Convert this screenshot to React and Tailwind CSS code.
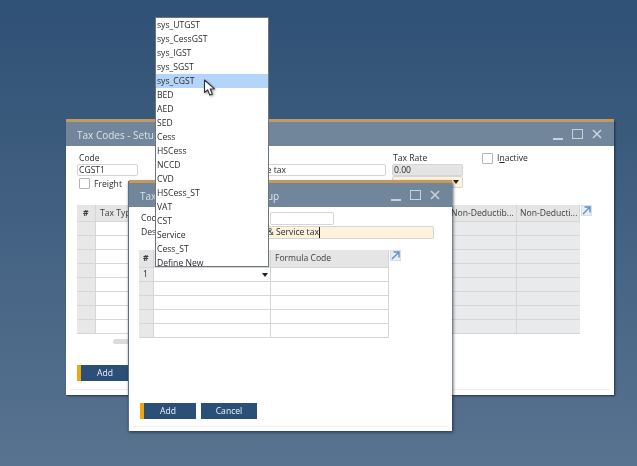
import React from "react";

const font = { fontFamily: '"Open Sans","Liberation Sans",sans-serif' };

function WinButtons() {
  return (
    <div className="flex items-center gap-[9px]">
      <span className="w-[10px] h-[2px] bg-[#c9d2db] mt-[9px]" />
      <span className="w-[11px] h-[10px] border-[1.5px] border-[#c9d2db]" />
      <svg width="10" height="10" viewBox="0 0 10 10" className="stroke-[#c9d2db]" strokeWidth="1.6"><path d="M1 1l8 8M9 1l-8 8" /></svg>
    </div>
  );
}

function Title({ text }) {
  return (
    <div className="h-[24px] bg-[#71859b] border-t-[3px] border-[#c19a5f] box-content -mt-px flex items-center justify-between pl-[11px] pr-[12px]">
      <span className="text-[10px] pt-[2px] text-[#dde3e9] whitespace-nowrap">{text}</span>
      <WinButtons />
    </div>
  );
}

function Expand() {
  return (
    <div className="w-[11px] h-[11px] bg-[#e6edf5] border border-[#d5dfe9] flex items-center justify-center">
      <svg width="9" height="9" viewBox="0 0 9 9" fill="none" stroke="#5f8fc4" strokeWidth="1.4"><path d="M1 8L7.5 1.5M2.5 1h5.5v5.5" /></svg>
    </div>
  );
}

function Btn({ label, accent }) {
  return (
    <div className={`w-[56px] h-[16px] flex items-center justify-center bg-[#2a5078] text-[8.6px] text-[#eef2f5] ${accent ? "border-l-4 border-[#eea70f] pr-[4px]" : ""}`}>
      {label}
    </div>
  );
}

function Input({ className = "", children }) {
  return (
    <div className={`h-[12px] border border-[#d5d5d5] rounded-[2px] text-[8.6px] leading-[10px] text-[#2b2b2b] pl-px overflow-hidden whitespace-nowrap ${className}`}>
      {children}
    </div>
  );
}

const backCols = "grid grid-cols-[18px_100px_100px_153px_68px_64px]";

function BackTable() {
  return (
    <div className="w-[503px] border-r border-b border-[#d6d6d6]">
      <div className={`${backCols} h-[16px] bg-[#e5e5e5] text-[8.6px] leading-[16px] text-[#3c3c3c]`}>
        <span className="pl-[6px] font-bold">#</span>
        <span className="pl-[4px] border-l border-[#d6d6d6]">Tax Type</span>
        <span className="border-l border-[#d6d6d6]" />
        <span className="border-l border-[#d6d6d6]" />
        <span className="pl-[2px] border-l border-[#d6d6d6] whitespace-nowrap overflow-hidden">Non-Deductib...</span>
        <span className="pl-[3px] border-l border-[#d6d6d6] whitespace-nowrap overflow-hidden">Non-Deducti...</span>
      </div>
      {[0, 1, 2, 3, 4, 5, 6, 7].map((i) => (
        <div key={i} className={`${backCols} h-[14px] border-t border-[#d6d6d6]`}>
          <span className="bg-[#e8e8e8]" />
          <span className="border-l border-[#d6d6d6]" />
          <span className="border-l border-[#d6d6d6]" />
          <span className="border-l border-[#d6d6d6]" />
          <span className="bg-[#e9eaeb] border-l border-[#d6d6d6]" />
          <span className="bg-[#e9eaeb] border-l border-[#d6d6d6]" />
        </div>
      ))}
    </div>
  );
}

function BackWindow() {
  return (
    <div className="absolute left-[66px] top-[120px] w-[548px] h-[275px] bg-white shadow-[1px_1px_2px_rgba(20,35,55,0.8)] flex flex-col">
      <Title text="Tax Codes - Setup" />
      <div className="flex-1 mx-[4px] mb-[5px] px-[7px] border-b border-[#f0efec] flex flex-col">
        <div className="flex mt-[6px] h-[38px]">
          <div className="w-[78px] shrink-0">
            <div className="text-[8.6px] leading-[12px] text-[#2b2b2b] pl-[2px]">Code</div>
            <Input className="w-[61px]">CGST1</Input>
            <div className="flex items-center mt-[2px] ml-[2px] gap-[4px]">
              <span className="w-[11px] h-[11px] border border-[#b5b5b5] rounded-[1px]" />
              <span className="text-[8.6px] text-[#2b2b2b] leading-[10px]">Freight</span>
            </div>
          </div>
          <div className="w-[231px] shrink-0 pt-[12px]">
            <Input className="text-right pr-[99px]">Central Goods &amp; Service tax</Input>
          </div>
          <div className="w-[92px] shrink-0 pl-[6px]">
            <div className="text-[8.6px] leading-[12px] text-[#2b2b2b] pl-px">Tax Rate</div>
            <Input className="w-[71px] bg-[#e4e4e4]">0.00</Input>
            <div className="w-[71px] h-[12px] bg-[#fdf3dc] border border-[#d5d5d5] rounded-[2px] flex items-center justify-end pr-[3px]">
              <span className="w-0 h-0 border-x-[3px] border-x-transparent border-t-[4px] border-t-[#222]" />
            </div>
          </div>
          <div className="flex items-start gap-[4px] pl-[4px] mt-[1px]">
            <span className="w-[11px] h-[11px] border border-[#b5b5b5] rounded-[1px]" />
            <span className="text-[8.6px] text-[#2b2b2b] leading-[10px]">I<u>n</u>active</span>
          </div>
        </div>
        <div className="flex items-start mt-[15px]">
          <BackTable />
          <div className="ml-px"><Expand /></div>
        </div>
        <div className="ml-[36px] mt-[5px] w-[60px] h-[5px] rounded-full bg-[#dcdcdc]" />
        <div className="mt-[21px]"><Btn label="Add" accent /></div>
      </div>
    </div>
  );
}

function FrontTable() {
  const cols = "grid grid-cols-[14px_117px_118px]";
  return (
    <div className="w-[250px] border-r border-b border-[#d6d6d6]">
      <div className={`${cols} h-[17px] bg-[#e5e5e5] text-[8.6px] leading-[16px] text-[#3c3c3c]`}>
        <span className="pl-[4px] font-bold">#</span>
        <span className="border-l border-[#d6d6d6]" />
        <span className="pl-[4px] border-l border-[#d6d6d6]">Formula Code</span>
      </div>
      {[0, 1, 2, 3, 4].map((i) => (
        <div key={i} className={`${cols} h-[14px] border-t border-[#d6d6d6]`}>
          <span className="bg-[#e8e8e8] text-[8.6px] leading-[13px] pl-[4px] text-[#2b2b2b]">{i === 0 ? "1" : ""}</span>
          <span className="border-l border-[#d6d6d6] flex items-center justify-end pr-[2px]">
            {i === 0 && <span className="w-0 h-0 border-x-[3px] border-x-transparent border-t-[4px] border-t-[#222]" />}
          </span>
          <span className="border-l border-[#d6d6d6]" />
        </div>
      ))}
    </div>
  );
}

function FrontWindow() {
  return (
    <div className="absolute left-[128px] top-[181px] w-[324px] h-[250px] bg-white border-l border-[#5b7088] shadow-[1px_1px_3px_rgba(20,35,55,0.8)] flex flex-col">
      <Title text="Tax Type Combination - Setup" />
      <div className="flex-1 ml-[4px] mr-[4px] mb-[4px] pl-[6px] pr-[14px] border-b border-[#f0efec] flex flex-col">
        <div className="mt-[5px] flex items-center h-[13px]">
          <span className="w-[131px] text-[8.6px] text-[#2b2b2b] pl-[2px]">Code</span>
          <Input className="w-[64px] h-[13px]" />
        </div>
        <div className="mt-px flex items-center h-[13px]">
          <span className="w-[52px] text-[8.6px] text-[#2b2b2b] pl-[2px]">Description</span>
          <div className="w-[243px] h-[13px] bg-[#fdf3dc] border border-[#d5d5d5] rounded-[2px] text-[8.6px] leading-[11px] text-[#2b2b2b] pl-[16px] whitespace-nowrap flex items-center">
            <span>Central Goods &amp; Service tax</span>
            <span className="w-px h-[11px] bg-[#222]" />
          </div>
        </div>
        <div className="flex items-start mt-[11px]">
          <FrontTable />
          <div className="ml-px"><Expand /></div>
        </div>
        <div className="mt-auto mb-[7px] ml-px flex items-end gap-[5px]">
          <Btn label="Add" accent />
          <Btn label="Cancel" />
        </div>
      </div>
    </div>
  );
}

const items = ["sys_UTGST","sys_CessGST","sys_IGST","sys_SGST","sys_CGST","BED","AED","SED","Cess","HSCess","NCCD","CVD","HSCess_ST","VAT","CST","Service","Cess_ST","Define New"];

function Dropdown() {
  return (
    <div className="absolute left-[155px] top-[17px] w-[114px] h-[250px] bg-white border border-[#6d7680] overflow-hidden">
      {items.map((t) => (
        <div key={t} className={`h-[14px] leading-[14px] pl-px text-[8.6px] text-[#2b2b2b] whitespace-nowrap ${t === "sys_CGST" ? "bg-[#b3d4fb]" : ""}`}>{t}</div>
      ))}
    </div>
  );
}

function Cursor() {
  return (
    <svg className="absolute left-[203px] top-[79px] drop-shadow-[1px_1px_1px_rgba(0,0,0,0.4)]" width="14" height="19" viewBox="0 0 14 19">
      <path d="M1.5 1L1.5 13.5L4.6 10.8L6.8 16L9.4 15L7.2 10L11.5 9.8Z" fill="#fff" stroke="#333" strokeWidth="1.1" strokeLinejoin="round" />
    </svg>
  );
}

export default function App() {
  return (
    <div className="relative w-[637px] h-[466px] overflow-hidden bg-gradient-to-b from-[#2f5175] to-[#587390] blur-[0.3px]" style={font}>
      <BackWindow />
      <FrontWindow />
      <Dropdown />
      <Cursor />
    </div>
  );
}
